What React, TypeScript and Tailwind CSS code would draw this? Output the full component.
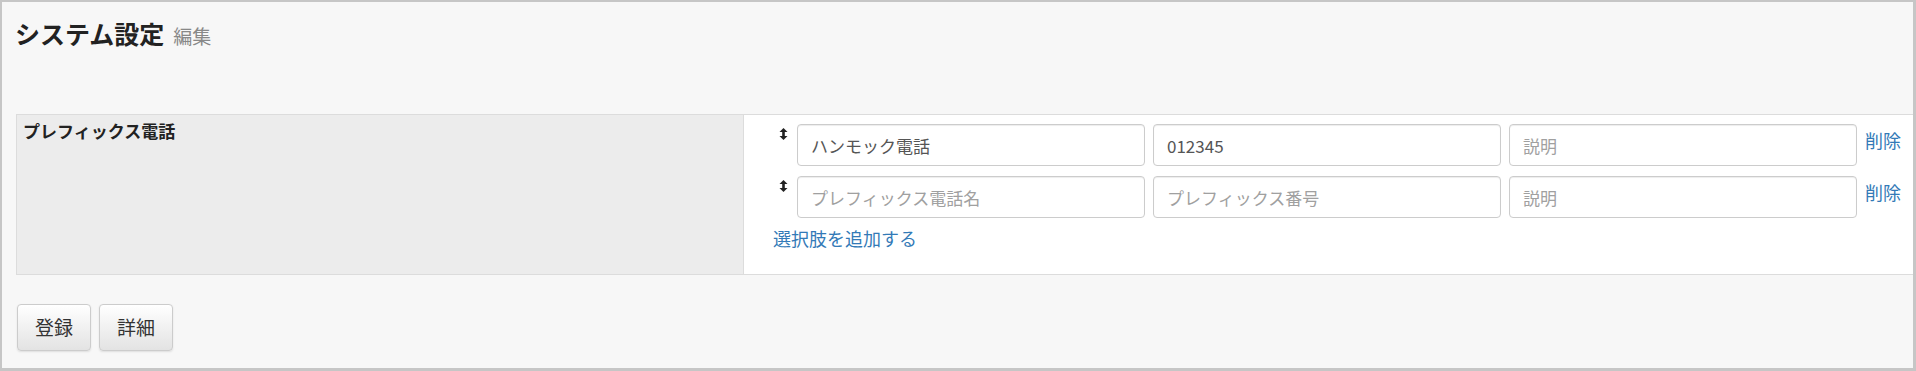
import React from "react";

function DragHandle() {
  return (
    <svg width="9" height="12" viewBox="0 0 9 12" className="block">
      <path d="M4.5 0 L8.5 4 L0.5 4 Z" fill="#222" />
      <rect x="3.2" y="3" width="2.6" height="6" fill="#222" />
      <path d="M4.5 12 L8.5 8 L0.5 8 Z" fill="#222" />
    </svg>
  );
}

const rows = [
  { name: "ハンモック電話", number: "012345" },
  { name: "", number: "" },
];

export default function App() {
  return (
    <div className="w-[1916px] h-[371px] overflow-hidden bg-[#f7f7f7] border-t-2 border-l-2 border-r-[3px] border-b-[3px] border-[#c6c6c6] font-['Noto_Sans_CJK_JP','Noto_Sans',sans-serif] text-[#333]">
      {/* Title */}
      <div className="pl-[13px] pt-[16px] flex items-baseline gap-[9px] leading-[30px]">
        <h1 className="text-[25px] font-bold text-[#222]">システム設定</h1>
        <span className="text-[19px] text-[#888]">編集</span>
      </div>

      {/* Form table */}
      <div className="ml-[14px] mt-[63px] flex border-t border-b border-l border-[#dcdcdc]">
        <div className="w-[727px] shrink-0 bg-[#ececec] border-r border-[#dcdcdc] px-[6px] pt-[4px] text-[17px] leading-[24px] font-bold text-[#222]">
          プレフィックス電話
        </div>
        <div className="flex-1 bg-white pl-[29px] pt-[9px] pb-[24px]">
          {rows.map((row, i) => (
            <div key={i} className={`flex items-start ${i > 0 ? "mt-[10px]" : ""}`}>
              <div className="w-[24px] shrink-0 pl-[6px] pt-[4px]">
                <DragHandle />
              </div>
              <input
                type="text"
                defaultValue={row.name}
                placeholder="プレフィックス電話名"
                className="w-[348px] h-[42px] px-[13px] text-[17px] text-[#555] placeholder-[#a0a0a0] bg-white border border-[#ccc] rounded-[4px] shadow-[inset_0_1px_1px_rgba(0,0,0,0.075)] outline-none"
              />
              <input
                type="text"
                defaultValue={row.number}
                placeholder="プレフィックス番号"
                className="ml-[8px] w-[348px] h-[42px] px-[13px] text-[17px] text-[#555] placeholder-[#a0a0a0] bg-white border border-[#ccc] rounded-[4px] shadow-[inset_0_1px_1px_rgba(0,0,0,0.075)] outline-none"
              />
              <input
                type="text"
                placeholder="説明"
                className="ml-[8px] w-[348px] h-[42px] px-[13px] text-[17px] text-[#555] placeholder-[#a0a0a0] bg-white border border-[#ccc] rounded-[4px] shadow-[inset_0_1px_1px_rgba(0,0,0,0.075)] outline-none"
              />
              <a href="#" className="ml-[8px] pt-[4px] text-[18px] leading-[24px] text-[#337ab7] whitespace-nowrap">
                削除
              </a>
            </div>
          ))}
          <a href="#" className="block mt-[8px] text-[18px] leading-[24px] text-[#337ab7]">
            選択肢を追加する
          </a>
        </div>
      </div>

      {/* Buttons */}
      <div className="ml-[15px] mt-[29px] flex gap-[8px]">
        <button className="w-[74px] h-[47px] rounded-[4px] border border-[#ccc] bg-gradient-to-b from-white to-[#e3e3e3] shadow-[0_1px_2px_rgba(0,0,0,0.1)] text-[19px] text-[#333]">
          登録
        </button>
        <button className="w-[74px] h-[47px] rounded-[4px] border border-[#ccc] bg-gradient-to-b from-white to-[#e3e3e3] shadow-[0_1px_2px_rgba(0,0,0,0.1)] text-[19px] text-[#333]">
          詳細
        </button>
      </div>
    </div>
  );
}
